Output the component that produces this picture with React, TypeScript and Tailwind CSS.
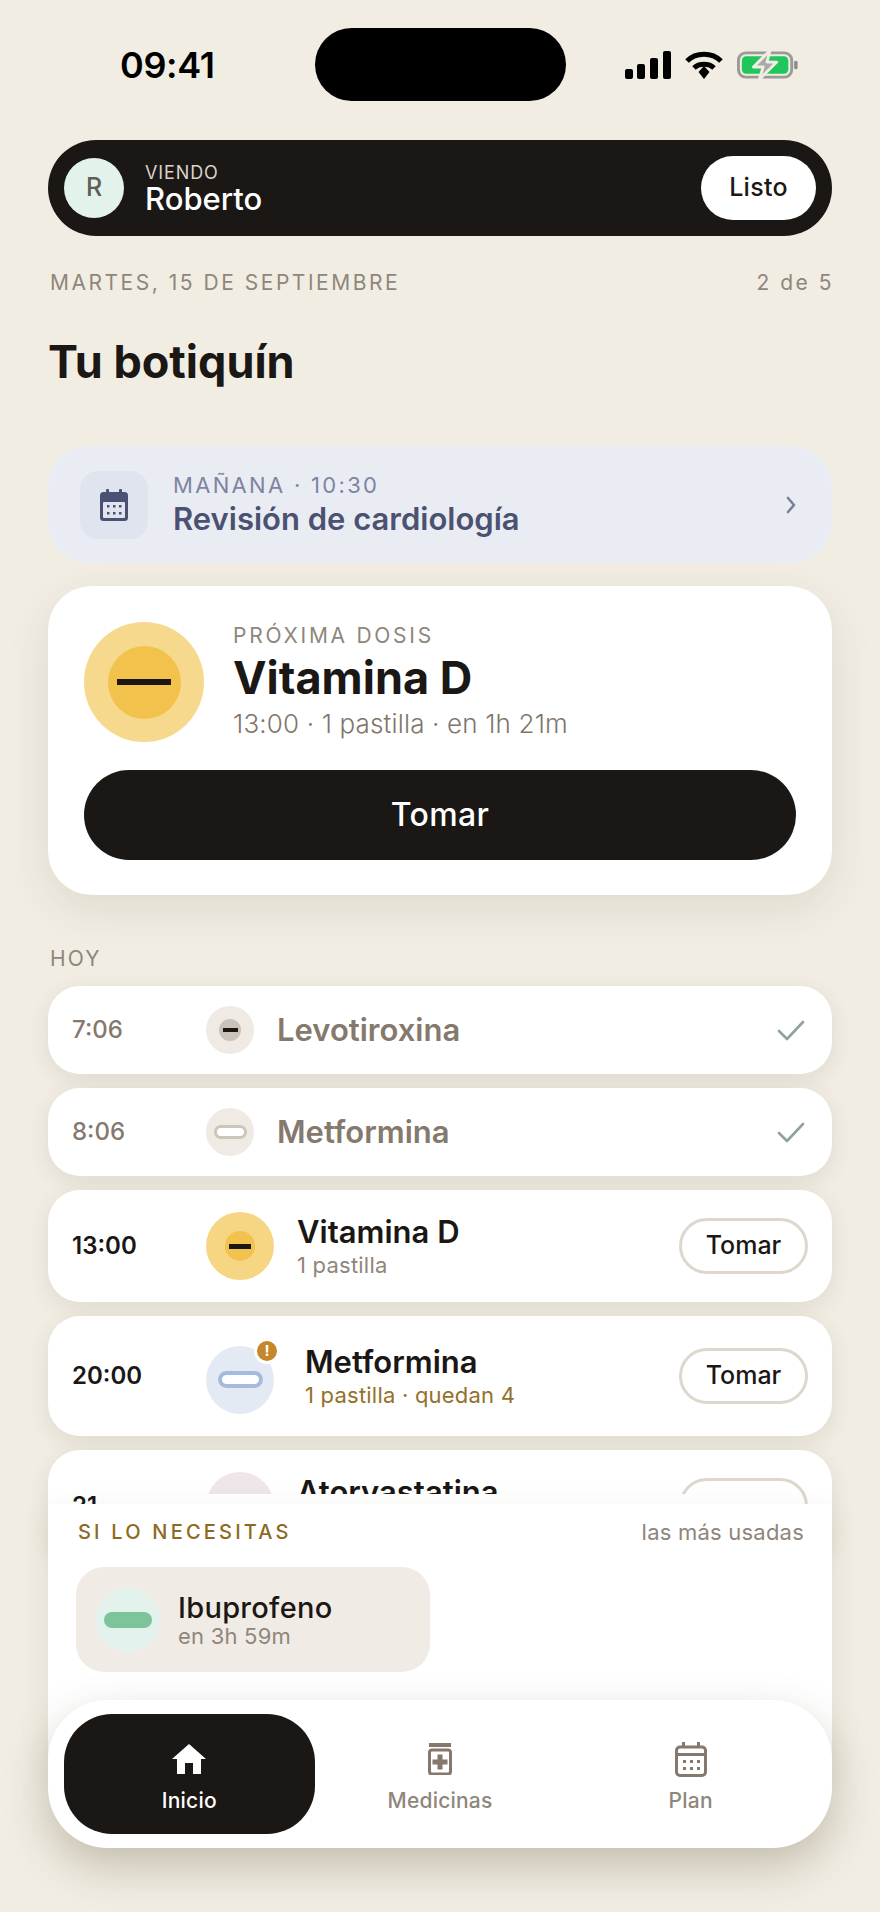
function BatteryIcon() {
  return (
    <svg width="62" height="28" viewBox="0 0 64 28" fill="none">
      <rect x="1.5" y="1.5" width="55" height="25" rx="7.5" stroke="#9a9a98" strokeWidth="3" />
      <rect x="5" y="5" width="48" height="18" rx="4.5" fill="#1fc65b" />
      <rect x="59" y="9.5" width="3.5" height="9" rx="1.7" fill="#8b8b89" />
      <path d="M34 -1 L17 16 H27 L23 29 L41 11 H31 Z" fill="#a9a9a7" stroke="#f1ede3" strokeWidth="3" strokeLinejoin="round" />
    </svg>
  );
}

function StatusIcons() {
  return (
    <div className="flex items-center gap-[14px]">
      <svg width="46" height="28" viewBox="0 0 46 28" fill="#000">
        <rect x="0" y="18" width="8" height="10" rx="2" />
        <rect x="12" y="13" width="8" height="15" rx="2" />
        <rect x="25" y="7" width="8" height="21" rx="2" />
        <rect x="38" y="0" width="8" height="28" rx="2" />
      </svg>
      <svg width="38" height="28" viewBox="0 0 38 28" fill="none" stroke="#000" strokeWidth="5">
        <path d="M2 10 C11 1 27 1 36 10" />
        <path d="M9 17 C14 12 24 12 29 17" />
        <path d="M13.5 20 L19 14 L24.5 20 L19 27 Z" fill="#000" stroke="none" transform="translate(0 1)" />
      </svg>
      <BatteryIcon />
    </div>
  );
}

function CalendarSolid() {
  return (
    <svg width="28" height="32" viewBox="0 0 28 32">
      <rect x="6" y="0" width="3" height="6" rx="1" fill="#4b5170" />
      <rect x="19" y="0" width="3" height="6" rx="1" fill="#4b5170" />
      <rect x="0" y="3" width="28" height="29" rx="3.5" fill="#4b5170" />
      <rect x="3" y="13" width="22" height="16" rx="1" fill="#e0e4ee" />
      {[7, 13, 19].map((x) => (
        <g key={x} fill="#4b5170">
          <rect x={x} y="16" width="2.5" height="2.5" />
          <rect x={x} y="23" width="2.5" height="2.5" />
        </g>
      ))}
    </svg>
  );
}

function Chevron() {
  return (
    <svg width="10" height="18" viewBox="0 0 10 18" fill="none" stroke="#7a809c" strokeWidth="2.6" strokeLinecap="round" strokeLinejoin="round">
      <path d="M2 2 L8 9 L2 16" />
    </svg>
  );
}

function Check() {
  return (
    <svg width="28" height="21" viewBox="0 0 28 21" fill="none" stroke="#8fa39a" strokeWidth="2.6" strokeLinecap="round" strokeLinejoin="round" className="mr-[3px]">
      <path d="M2 11 L10 19 L26 2" />
    </svg>
  );
}

function HomeIcon() {
  return (
    <svg width="34" height="30" viewBox="0 0 34 30" fill="#fff">
      <path d="M17 0 L34 15 H29 V30 H21 V19 H13 V30 H5 V15 H0 Z" />
    </svg>
  );
}

function JarIcon() {
  return (
    <svg width="24" height="32" viewBox="0 0 24 32" fill="#85796d">
      <rect x="1" y="0" width="22" height="4" />
      <rect x="1.5" y="7" width="21" height="24" rx="2.5" fill="none" stroke="#85796d" strokeWidth="3" />
      <path d="M9.5 11.5 H14.5 V16.5 H19.5 V21.5 H14.5 V26.5 H9.5 V21.5 H4.5 V16.5 H9.5 Z" />
    </svg>
  );
}

function PlanIcon() {
  return (
    <svg width="32" height="35" viewBox="0 0 32 35" fill="#85796d">
      <rect x="7" y="0" width="3" height="6" />
      <rect x="22" y="0" width="3" height="6" />
      <rect x="1.5" y="5" width="29" height="28.5" rx="3.5" fill="none" stroke="#85796d" strokeWidth="3" />
      <rect x="2" y="11" width="28" height="3" />
      {[8, 15, 22].map((x) => (
        <g key={x}>
          <rect x={x} y="18" width="3" height="3" />
          <rect x={x} y="25" width="3" height="3" />
        </g>
      ))}
    </svg>
  );
}

type Row = {
  time: string;
  name: string;
  sub?: string;
  done?: boolean;
  warn?: boolean;
  icon: React.ReactNode;
  rowClass: string;
  timeClass: string;
  textClass: string;
  nameClass: string;
  subClass?: string;
};

const rows: Row[] = [
  {
    time: "7:06",
    name: "Levotiroxina",
    done: true,
    rowClass: "h-[88px]",
    timeClass: "font-medium text-[#85796d]",
    textClass: "ml-[23px]",
    nameClass: "font-semibold text-[#85796d]",
    icon: (
      <div className="flex h-[48px] w-[48px] items-center justify-center rounded-full bg-[#efebe4]">
        <div className="flex h-[22px] w-[22px] items-center justify-center rounded-full bg-[#c9c3b9]">
          <div className="h-[4px] w-[15px] bg-[#1a1715]" />
        </div>
      </div>
    ),
  },
  {
    time: "8:06",
    name: "Metformina",
    done: true,
    rowClass: "h-[88px]",
    timeClass: "font-medium text-[#85796d]",
    textClass: "ml-[23px]",
    nameClass: "font-semibold text-[#85796d]",
    icon: (
      <div className="flex h-[48px] w-[48px] items-center justify-center rounded-full bg-[#efebe4]">
        <div className="h-[14px] w-[33px] rounded-full border-[3px] border-[#cbc5ba] bg-white" />
      </div>
    ),
  },
  {
    time: "13:00",
    name: "Vitamina D",
    sub: "1 pastilla",
    rowClass: "h-[112px]",
    timeClass: "font-semibold text-[#1a1715]",
    textClass: "ml-[23px]",
    nameClass: "font-semibold text-[#1a1715]",
    subClass: "text-[#8f867b]",
    icon: (
      <div className="flex h-[68px] w-[68px] items-center justify-center rounded-full bg-[#f6d583]">
        <div className="flex h-[30px] w-[30px] items-center justify-center rounded-full bg-[#f3c24d]">
          <div className="h-[5px] w-[22px] bg-[#1a1715]" />
        </div>
      </div>
    ),
  },
  {
    time: "20:00",
    name: "Metformina",
    sub: "1 pastilla · quedan 4",
    warn: true,
    rowClass: "h-[120px]",
    timeClass: "font-semibold text-[#1a1715]",
    textClass: "ml-[31px]",
    nameClass: "font-semibold text-[#1a1715]",
    subClass: "text-[#94712a]",
    icon: (
      <div className="flex h-[68px] w-[68px] items-center justify-center rounded-full bg-[#e4eaf3]">
        <div className="h-[17px] w-[45px] rounded-full border-[4px] border-[#a3bcdb] bg-white" />
      </div>
    ),
  },
  {
    time: "21:00",
    name: "Atorvastatina",
    sub: "1 pastilla",
    rowClass: "h-[112px]",
    timeClass: "font-semibold text-[#1a1715]",
    textClass: "ml-[23px]",
    nameClass: "font-semibold text-[#1a1715]",
    subClass: "text-[#8f867b]",
    icon: <div className="h-[68px] w-[68px] rounded-full bg-[#efe6ea]" />,
  },
];

function DoseRow({ row }: { row: Row }) {
  return (
    <div className={`flex items-center rounded-[32px] bg-white pr-[24px] pl-[24px] shadow-[0_6px_22px_rgba(70,55,25,0.1)] ${row.rowClass}`}>
      <span className={`w-[134px] text-[24px] ${row.timeClass}`}>{row.time}</span>
      <div className={row.warn ? "relative mt-[7px]" : "relative"}>
        {row.icon}
        {row.warn && (
          <div className="absolute -top-[8px] -right-[6px] flex h-[26px] w-[26px] items-center justify-center rounded-full border-[3px] border-white bg-[#c4872c] text-[15px] leading-none font-bold text-white">
            !
          </div>
        )}
      </div>
      <div className={`min-w-0 flex-1 ${row.textClass}`}>
        <div className={`text-[31px] leading-[36px] ${row.nameClass}`}>{row.name}</div>
        {row.sub && <div className={`mt-[2px] text-[22px] leading-[26px] tracking-[0.01em] ${row.subClass}`}>{row.sub}</div>}
      </div>
      {row.done ? (
        <Check />
      ) : (
        <button className="flex h-[56px] w-[129px] items-center justify-center rounded-full border-[3px] border-[#ddd7cd] text-[25px] font-medium text-[#1a1715]">
          Tomar
        </button>
      )}
    </div>
  );
}

export default function App() {
  return (
    <div className="relative h-[1912px] w-[880px] overflow-hidden bg-[#f1ede3] [font-family:Inter,sans-serif]">
      {/* status bar */}
      <div className="grid h-[129px] grid-cols-[1fr_251px_1fr] items-start pt-[28px]">
        <span className="mt-[13px] pl-[120px] text-[36px] leading-[48px] font-semibold tracking-[-0.01em] text-black">09:41</span>
        <div className="h-[73px] rounded-full bg-black" />
        <div className="mt-[23px] pl-[59px]">
          <StatusIcons />
        </div>
      </div>

      {/* viewing as */}
      <div className="mx-[48px] mt-[11px] flex h-[96px] items-center rounded-full bg-[#1a1715] pr-[16px] pl-[16px]">
        <div className="flex h-[60px] w-[60px] items-center justify-center rounded-full bg-[#e4f2ec] text-[25px] font-medium text-[#5f5f58]">R</div>
        <div className="ml-[21px] flex-1 pt-[3px]">
          <div className="text-[18px] leading-[22px] tracking-[0.05em] text-[#d8d3ca]">VIENDO</div>
          <div className="-mt-[3px] text-[31px] leading-[36px] font-medium text-white">Roberto</div>
        </div>
        <button className="h-[64px] w-[115px] rounded-full bg-white text-[25px] font-medium tracking-[0.01em] text-[#1a1715]">Listo</button>
      </div>

      <div className="mx-[48px] mt-[35px] flex items-center justify-between pl-[2px] text-[21px] leading-[24px] tracking-[0.12em] text-[#8f867b]">
        <span>MARTES, 15 DE SEPTIEMBRE</span>
        <span className="-mr-[2px]">2 de 5</span>
      </div>

      <h1 className="mt-[39px] ml-[48px] text-[45px] leading-[56px] font-bold text-[#1a1715]">Tu botiquín</h1>

      {/* appointment */}
      <div className="mx-[48px] mt-[56px] flex h-[117px] items-center rounded-[40px] bg-[#eaecf4] pr-[36px] pl-[32px]">
        <div className="flex h-[68px] w-[68px] items-center justify-center rounded-[18px] bg-[#e0e4ee]">
          <CalendarSolid />
        </div>
        <div className="ml-[25px] flex-1">
          <div className="text-[22px] leading-[26px] tracking-[0.105em] text-[#7e84a0]">MAÑANA · 10:30</div>
          <div className="mt-[3px] text-[31px] leading-[36px] font-semibold text-[#4b5170]">Revisión de cardiología</div>
        </div>
        <Chevron />
      </div>

      {/* next dose */}
      <div className="mx-[48px] mt-[23px] h-[309px] rounded-[44px] bg-white pt-[36px] pr-[36px] pl-[36px] shadow-[0_14px_44px_rgba(70,55,25,0.1)]">
        <div className="flex items-center">
          <div className="flex h-[120px] w-[120px] items-center justify-center rounded-full bg-[#f6d98c]">
            <div className="flex h-[73px] w-[73px] items-center justify-center rounded-full bg-[#f3c24d]">
              <div className="h-[6px] w-[54px] bg-[#1a1715]" />
            </div>
          </div>
          <div className="ml-[29px]">
            <div className="text-[21px] leading-[24px] tracking-[0.13em] text-[#8f867b]">PRÓXIMA DOSIS</div>
            <div className="mt-[3px] text-[45px] leading-[54px] font-bold text-[#1a1715]">Vitamina D</div>
            <div className="mt-[3px] text-[26px] leading-[32px] font-light tracking-[0.006em] text-[#7f766b]">13:00 · 1 pastilla · en 1h 21m</div>
          </div>
        </div>
        <button className="mt-[28px] h-[90px] w-full rounded-full bg-[#1a1715] text-[32px] font-medium tracking-[0.01em] text-white">Tomar</button>
      </div>

      {/* today */}
      <div className="mt-[52px] ml-[50px] text-[21px] leading-[24px] tracking-[0.1em] text-[#8f867b]">HOY</div>
      <div className="mx-[48px] mt-[15px] flex flex-col gap-[14px]">
        {rows.map((row) => (
          <DoseRow key={row.time} row={row} />
        ))}
      </div>

      <div className="absolute top-[1494px] right-[80px] left-[97px] h-[20px] bg-white" />

      {/* as needed */}
      <div className="absolute top-[1504px] right-[48px] left-[48px] h-[260px] bg-white px-[28px] pt-[16px] shadow-[0_8px_30px_rgba(70,55,25,0.08)]">
        <div className="flex items-center justify-between pl-[2px]">
          <span className="text-[20px] leading-[24px] font-medium tracking-[0.16em] text-[#8d6a22]">SI LO NECESITAS</span>
          <span className="text-[22px] leading-[24px] tracking-[0.01em] text-[#8f867b]">las más usadas</span>
        </div>
        <div className="mt-[23px] flex h-[105px] w-[354px] items-center rounded-[28px] bg-[#f0ebe4] pl-[20px]">
          <div className="flex h-[64px] w-[64px] items-center justify-center rounded-full bg-[#e3f2ec]">
            <div className="h-[16px] w-[48px] rounded-full bg-[#7dc49a]" />
          </div>
          <div className="ml-[18px]">
            <div className="text-[29px] leading-[32px] font-medium tracking-[0.01em] text-[#1a1715]">Ibuprofeno</div>
            <div className="text-[22px] leading-[24px] tracking-[0.01em] text-[#8f867b]">en 3h 59m</div>
          </div>
        </div>
      </div>

      {/* tab bar */}
      <nav className="absolute top-[1700px] right-[48px] left-[48px] flex h-[148px] items-center rounded-[60px] bg-white px-[16px] shadow-[0_18px_44px_rgba(70,55,25,0.26)]">
        <div className="flex h-[120px] flex-1 flex-col items-center rounded-[48px] bg-[#1a1715] pt-[30px]">
          <HomeIcon />
          <span className="mt-[15px] text-[21px] leading-[24px] font-medium tracking-[0.01em] text-white">Inicio</span>
        </div>
        <div className="flex h-[120px] flex-1 flex-col items-center pt-[29px]">
          <JarIcon />
          <span className="mt-[14px] text-[21px] leading-[24px] font-medium tracking-[0.01em] text-[#8f867b]">Medicinas</span>
        </div>
        <div className="flex h-[120px] flex-1 flex-col items-center pt-[28px]">
          <PlanIcon />
          <span className="mt-[12px] text-[21px] leading-[24px] font-medium tracking-[0.01em] text-[#8f867b]">Plan</span>
        </div>
      </nav>
    </div>
  );
}
